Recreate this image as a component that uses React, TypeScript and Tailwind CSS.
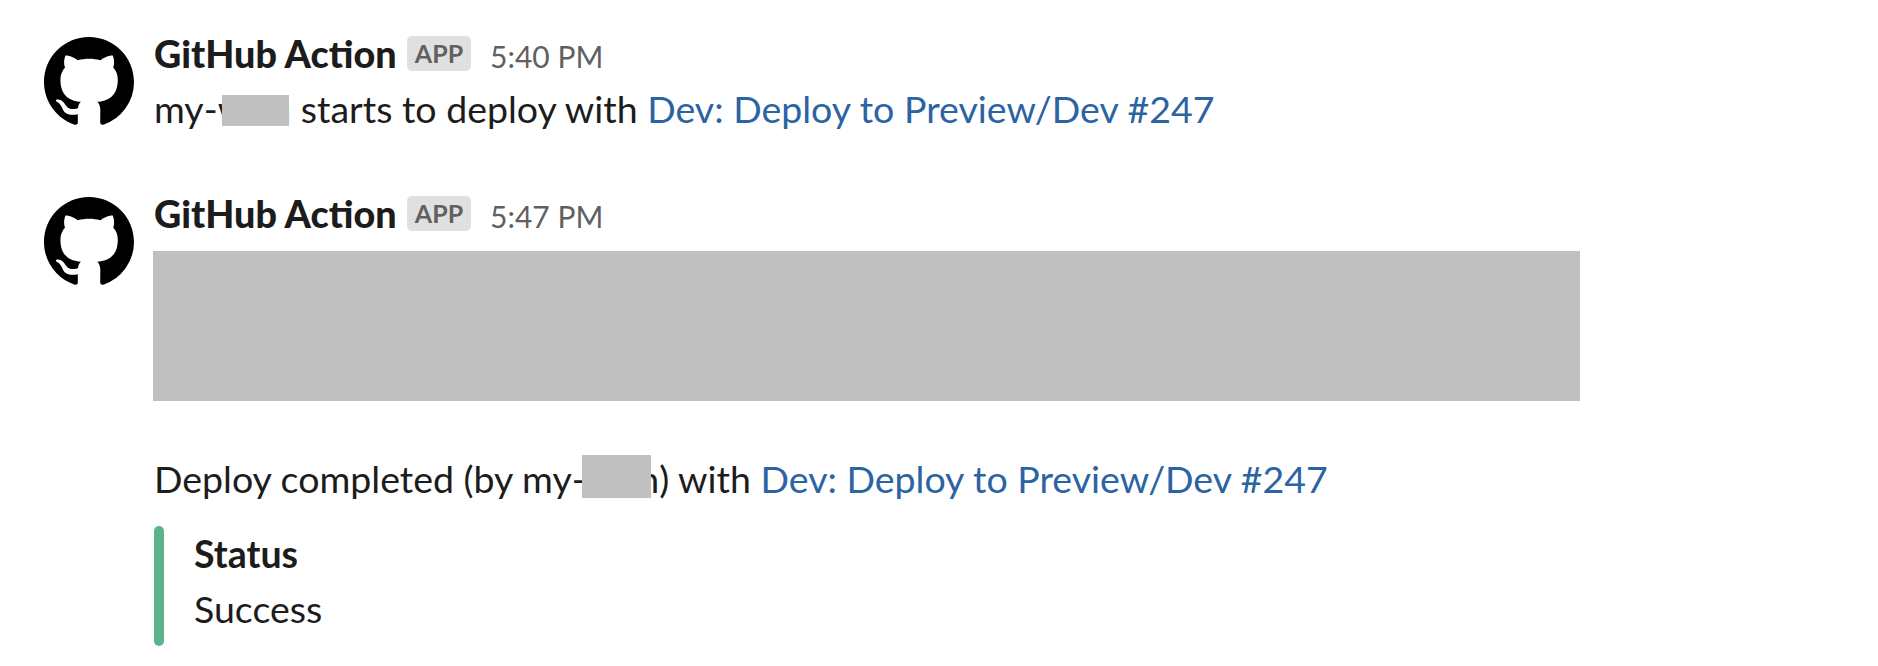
import { type ReactNode } from "react";

function Avatar() {
  return (
    <svg viewBox="0 0 16 16" className="mt-px size-[90px] shrink-0 fill-black" aria-label="GitHub">
      <path d="M8 0C3.58 0 0 3.58 0 8c0 3.54 2.29 6.53 5.47 7.59.4.07.55-.17.55-.38 0-.19-.01-.82-.01-1.49-2.01.37-2.53-.49-2.69-.94-.09-.23-.48-.94-.82-1.13-.28-.15-.68-.52-.01-.53.63-.01 1.08.58 1.23.82.72 1.21 1.87.87 2.33.66.07-.52.28-.87.51-1.07-1.78-.2-3.64-.89-3.64-3.95 0-.87.31-1.59.82-2.15-.08-.2-.36-1.02.08-2.12 0 0 .67-.21 2.2.82.64-.18 1.32-.27 2-.27s1.36.09 2 .27c1.53-1.04 2.2-.82 2.2-.82.44 1.1.16 1.92.08 2.12.51.56.82 1.27.82 2.15 0 3.07-1.87 3.75-3.65 3.95.29.25.54.73.54 1.48 0 1.07-.01 1.93-.01 2.2 0 .21.15.46.55.38A8.01 8.01 0 0 0 16 8c0-4.42-3.58-8-8-8Z" />
    </svg>
  );
}

function Message({ time, children }: { time: string; children: ReactNode }) {
  return (
    <article className="flex items-start gap-5">
      <Avatar />
      <div className="min-w-0 flex-1 whitespace-nowrap">
        <header className="flex h-[35px] items-center">
          <span className="w-[242px] text-[37.7px] leading-[35px] font-black">GitHub Action</span>
          <span className="ml-[11px] flex h-[35px] w-[64px] items-center justify-center rounded-[5px] bg-[#e0e0e0] text-[25px] font-bold text-[#616061]">APP</span>
          <time className="ml-[19px] pt-[5px] text-[30px] text-[#616061]">{time}</time>
        </header>
        {children}
      </div>
    </article>
  );
}

/* A name whose middle is covered by a grey block, leaving slivers of the outer letters. */
function Redacted({ maskClass }: { maskClass: string }) {
  return (
    <span className="relative flex w-[73.5px] justify-between">
      <span>w</span>
      <span>n</span>
      <span className={`absolute bg-[#c0c0c0] ${maskClass}`} />
    </span>
  );
}

function DeployLink() {
  return <a href="#" className="text-[#2b63a3]">Dev: Deploy to Preview/Dev #247</a>;
}

export default function App() {
  return (
    <main className="h-[666px] overflow-hidden bg-white pl-11 pt-9 font-[Lato,sans-serif] text-[37.5px] text-[#1d1c1d]">
      <div className="h-[160px]">
        <Message time="5:40 PM">
          <p className="mt-[10px] flex h-[56px] items-center whitespace-pre">
            my-<Redacted maskClass="left-[4px] top-[14px] h-[31px] w-[67px]" /> starts to deploy with <DeployLink />
          </p>
        </Message>
      </div>
      <Message time="5:47 PM">
        <div className="-ml-px mt-[20px] h-[150px] w-[1427px] bg-[#c0c0c0]" />
        <p className="mt-[50px] flex h-[56px] items-center whitespace-pre">
          Deploy completed (by my-<Redacted maskClass="-left-[4px] top-[4px] h-[43px] w-[69px]" />) with <DeployLink />
        </p>
        <section className="mt-[19px] flex h-[120px] gap-[30px]">
          <div className="w-[10px] rounded-[5px] bg-[#5ab489]" />
          <div className="leading-[55px]">
            <h2 className="font-bold">Status</h2>
            <p>Success</p>
          </div>
        </section>
      </Message>
    </main>
  );
}
